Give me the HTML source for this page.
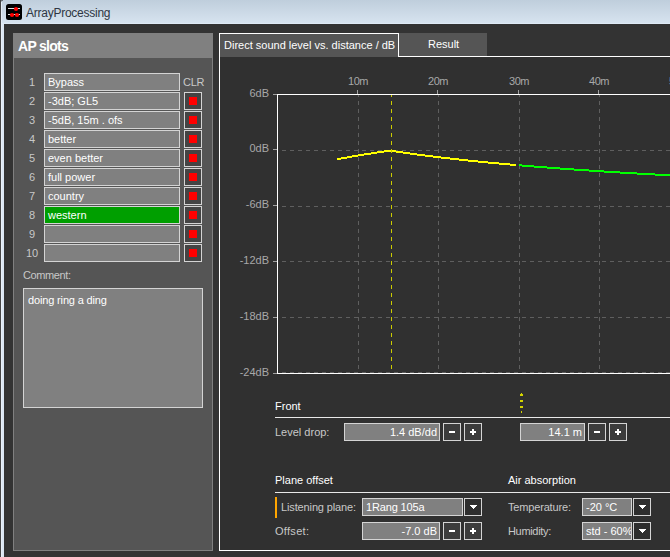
<!DOCTYPE html><html><head><meta charset="utf-8"><style>
html,body{margin:0;padding:0;width:670px;height:557px;overflow:hidden;background:#333333;font-family:'Liberation Sans', sans-serif;}
.t{position:absolute;white-space:nowrap;}
.b{position:absolute;box-sizing:border-box;}
</style></head><body>
<div class="b" style="left:0px;top:0px;width:670px;height:24px;background:linear-gradient(#bfcedc,#d8e4f0);"></div>
<div class="b" style="left:0px;top:23px;width:670px;height:1px;background:#dfeaf6;"></div>
<div class="b" style="left:0px;top:0px;width:1px;height:557px;background:#454545;"></div>
<div class="b" style="left:1px;top:24px;width:3px;height:533px;background:#dbe6f2;"></div>
<div class="b" style="left:1px;top:0px;width:1px;height:557px;background:#e9f0f8;opacity:0.9;"></div>
<div class="b" style="left:4px;top:24px;width:666px;height:533px;background:#333333;"></div>
<div class="b" style="left:1px;top:0px;width:2px;height:1px;background:#6a6f75;"></div>
<div class="b" style="left:1px;top:1px;width:1px;height:1px;background:#a9b2bb;"></div>
<svg class="b" style="left:6px;top:4px;width:16px;height:16px" viewBox="0 0 16 16"><rect x="0" y="0" width="16" height="16" rx="2.5" fill="#000"/><rect x="2" y="4" width="12" height="1" fill="#e0e0e0"/><rect x="2" y="10" width="12" height="1" fill="#e0e0e0"/><circle cx="10" cy="5" r="2.1" fill="#f00"/><circle cx="6" cy="11" r="2.1" fill="#f00"/><circle cx="11" cy="11" r="2.1" fill="#f00"/></svg>
<div class="t" style="left:26px;top:7px;font-size:12px;line-height:12px;color:#2e3642;letter-spacing:-0.25px;">ArrayProcessing</div>
<div class="b" style="left:13px;top:33px;width:200px;height:518px;background:#555555;border:1px solid #808080;"></div>
<div class="b" style="left:13px;top:33px;width:200px;height:25px;background:#808080;"></div>
<div class="t" style="left:18px;top:39px;font-size:14px;line-height:14px;color:#ffffff;font-weight:bold;letter-spacing:-0.7px;">AP slots</div>
<div class="b" style="left:44px;top:73px;width:136px;height:18px;background:#808080;border:1px solid #d4d4d4;"></div>
<div class="t" style="left:-18px;width:100px;top:77px;font-size:11px;line-height:11px;color:#c8c8c8;text-align:center;width:100px;">1</div>
<div class="t" style="left:48px;top:77px;font-size:11px;line-height:11px;color:#ffffff;">Bypass</div>
<div class="b" style="left:44px;top:92px;width:136px;height:18px;background:#808080;border:1px solid #d4d4d4;"></div>
<div class="t" style="left:-18px;width:100px;top:96px;font-size:11px;line-height:11px;color:#c8c8c8;text-align:center;width:100px;">2</div>
<div class="t" style="left:48px;top:96px;font-size:11px;line-height:11px;color:#ffffff;">-3dB; GL5</div>
<div class="b" style="left:184px;top:92px;width:18px;height:18px;background:#444444;border:1px solid #d4d4d4;"></div>
<div class="b" style="left:189px;top:97px;width:8px;height:8px;background:#ff0000;"></div>
<div class="b" style="left:44px;top:111px;width:136px;height:18px;background:#808080;border:1px solid #d4d4d4;"></div>
<div class="t" style="left:-18px;width:100px;top:115px;font-size:11px;line-height:11px;color:#c8c8c8;text-align:center;width:100px;">3</div>
<div class="t" style="left:48px;top:115px;font-size:11px;line-height:11px;color:#ffffff;">-5dB, 15m . ofs</div>
<div class="b" style="left:184px;top:111px;width:18px;height:18px;background:#444444;border:1px solid #d4d4d4;"></div>
<div class="b" style="left:189px;top:116px;width:8px;height:8px;background:#ff0000;"></div>
<div class="b" style="left:44px;top:130px;width:136px;height:18px;background:#808080;border:1px solid #d4d4d4;"></div>
<div class="t" style="left:-18px;width:100px;top:134px;font-size:11px;line-height:11px;color:#c8c8c8;text-align:center;width:100px;">4</div>
<div class="t" style="left:48px;top:134px;font-size:11px;line-height:11px;color:#ffffff;">better</div>
<div class="b" style="left:184px;top:130px;width:18px;height:18px;background:#444444;border:1px solid #d4d4d4;"></div>
<div class="b" style="left:189px;top:135px;width:8px;height:8px;background:#ff0000;"></div>
<div class="b" style="left:44px;top:149px;width:136px;height:18px;background:#808080;border:1px solid #d4d4d4;"></div>
<div class="t" style="left:-18px;width:100px;top:153px;font-size:11px;line-height:11px;color:#c8c8c8;text-align:center;width:100px;">5</div>
<div class="t" style="left:48px;top:153px;font-size:11px;line-height:11px;color:#ffffff;">even better</div>
<div class="b" style="left:184px;top:149px;width:18px;height:18px;background:#444444;border:1px solid #d4d4d4;"></div>
<div class="b" style="left:189px;top:154px;width:8px;height:8px;background:#ff0000;"></div>
<div class="b" style="left:44px;top:168px;width:136px;height:18px;background:#808080;border:1px solid #d4d4d4;"></div>
<div class="t" style="left:-18px;width:100px;top:172px;font-size:11px;line-height:11px;color:#c8c8c8;text-align:center;width:100px;">6</div>
<div class="t" style="left:48px;top:172px;font-size:11px;line-height:11px;color:#ffffff;">full power</div>
<div class="b" style="left:184px;top:168px;width:18px;height:18px;background:#444444;border:1px solid #d4d4d4;"></div>
<div class="b" style="left:189px;top:173px;width:8px;height:8px;background:#ff0000;"></div>
<div class="b" style="left:44px;top:187px;width:136px;height:18px;background:#808080;border:1px solid #d4d4d4;"></div>
<div class="t" style="left:-18px;width:100px;top:191px;font-size:11px;line-height:11px;color:#c8c8c8;text-align:center;width:100px;">7</div>
<div class="t" style="left:48px;top:191px;font-size:11px;line-height:11px;color:#ffffff;">country</div>
<div class="b" style="left:184px;top:187px;width:18px;height:18px;background:#444444;border:1px solid #d4d4d4;"></div>
<div class="b" style="left:189px;top:192px;width:8px;height:8px;background:#ff0000;"></div>
<div class="b" style="left:44px;top:206px;width:136px;height:18px;background:#009f00;border:1px solid #d4d4d4;"></div>
<div class="t" style="left:-18px;width:100px;top:210px;font-size:11px;line-height:11px;color:#c8c8c8;text-align:center;width:100px;">8</div>
<div class="t" style="left:48px;top:210px;font-size:11px;line-height:11px;color:#ffffff;">western</div>
<div class="b" style="left:184px;top:206px;width:18px;height:18px;background:#444444;border:1px solid #d4d4d4;"></div>
<div class="b" style="left:189px;top:211px;width:8px;height:8px;background:#ff0000;"></div>
<div class="b" style="left:44px;top:225px;width:136px;height:18px;background:#808080;border:1px solid #d4d4d4;"></div>
<div class="t" style="left:-18px;width:100px;top:229px;font-size:11px;line-height:11px;color:#c8c8c8;text-align:center;width:100px;">9</div>
<div class="b" style="left:184px;top:225px;width:18px;height:18px;background:#444444;border:1px solid #d4d4d4;"></div>
<div class="b" style="left:189px;top:230px;width:8px;height:8px;background:#ff0000;"></div>
<div class="b" style="left:44px;top:244px;width:136px;height:18px;background:#808080;border:1px solid #d4d4d4;"></div>
<div class="t" style="left:-18px;width:100px;top:248px;font-size:11px;line-height:11px;color:#c8c8c8;text-align:center;width:100px;">10</div>
<div class="b" style="left:184px;top:244px;width:18px;height:18px;background:#444444;border:1px solid #d4d4d4;"></div>
<div class="b" style="left:189px;top:249px;width:8px;height:8px;background:#ff0000;"></div>
<div class="t" style="left:183px;top:77px;font-size:11px;line-height:11px;color:#c8c8c8;letter-spacing:-0.3px;">CLR</div>
<div class="t" style="left:23px;top:270px;font-size:11px;line-height:11px;color:#c8c8c8;letter-spacing:-0.4px;">Comment:</div>
<div class="b" style="left:23px;top:288px;width:180px;height:120px;background:#808080;border:1px solid #d4d4d4;"></div>
<div class="t" style="left:28px;top:295px;font-size:11px;line-height:11px;color:#ffffff;letter-spacing:-0.15px;">doing ring a ding</div>
<div class="b" style="left:219px;top:56px;width:482px;height:495px;background:#303030;border:1px solid #ffffff;"></div>
<div class="b" style="left:219px;top:33px;width:180px;height:24px;background:#555555;border:1px solid #ffffff;border-bottom:none;"></div>
<div class="b" style="left:399px;top:33px;width:88px;height:23px;background:#555555;"></div>
<div class="t" style="left:224px;top:40px;font-size:11px;line-height:11px;color:#ffffff;">Direct sound level vs. distance / dB</div>
<div class="t" style="left:428px;top:39px;font-size:11px;line-height:11px;color:#ffffff;">Result</div>
<svg class="b" style="left:0;top:0;width:670px;height:557px" viewBox="0 0 670 557" shape-rendering="crispEdges"><rect x="282" y="150" width="4" height="1" fill="#5f5f5f"/><rect x="290" y="150" width="4" height="1" fill="#5f5f5f"/><rect x="298" y="150" width="4" height="1" fill="#5f5f5f"/><rect x="306" y="150" width="4" height="1" fill="#5f5f5f"/><rect x="314" y="150" width="4" height="1" fill="#5f5f5f"/><rect x="322" y="150" width="4" height="1" fill="#5f5f5f"/><rect x="330" y="150" width="4" height="1" fill="#5f5f5f"/><rect x="338" y="150" width="4" height="1" fill="#5f5f5f"/><rect x="346" y="150" width="4" height="1" fill="#5f5f5f"/><rect x="354" y="150" width="4" height="1" fill="#5f5f5f"/><rect x="362" y="150" width="4" height="1" fill="#5f5f5f"/><rect x="370" y="150" width="4" height="1" fill="#5f5f5f"/><rect x="378" y="150" width="4" height="1" fill="#5f5f5f"/><rect x="386" y="150" width="4" height="1" fill="#5f5f5f"/><rect x="394" y="150" width="4" height="1" fill="#5f5f5f"/><rect x="402" y="150" width="4" height="1" fill="#5f5f5f"/><rect x="410" y="150" width="4" height="1" fill="#5f5f5f"/><rect x="418" y="150" width="4" height="1" fill="#5f5f5f"/><rect x="426" y="150" width="4" height="1" fill="#5f5f5f"/><rect x="434" y="150" width="4" height="1" fill="#5f5f5f"/><rect x="442" y="150" width="4" height="1" fill="#5f5f5f"/><rect x="450" y="150" width="4" height="1" fill="#5f5f5f"/><rect x="458" y="150" width="4" height="1" fill="#5f5f5f"/><rect x="466" y="150" width="4" height="1" fill="#5f5f5f"/><rect x="474" y="150" width="4" height="1" fill="#5f5f5f"/><rect x="482" y="150" width="4" height="1" fill="#5f5f5f"/><rect x="490" y="150" width="4" height="1" fill="#5f5f5f"/><rect x="498" y="150" width="4" height="1" fill="#5f5f5f"/><rect x="506" y="150" width="4" height="1" fill="#5f5f5f"/><rect x="514" y="150" width="4" height="1" fill="#5f5f5f"/><rect x="522" y="150" width="4" height="1" fill="#5f5f5f"/><rect x="530" y="150" width="4" height="1" fill="#5f5f5f"/><rect x="538" y="150" width="4" height="1" fill="#5f5f5f"/><rect x="546" y="150" width="4" height="1" fill="#5f5f5f"/><rect x="554" y="150" width="4" height="1" fill="#5f5f5f"/><rect x="562" y="150" width="4" height="1" fill="#5f5f5f"/><rect x="570" y="150" width="4" height="1" fill="#5f5f5f"/><rect x="578" y="150" width="4" height="1" fill="#5f5f5f"/><rect x="586" y="150" width="4" height="1" fill="#5f5f5f"/><rect x="594" y="150" width="4" height="1" fill="#5f5f5f"/><rect x="602" y="150" width="4" height="1" fill="#5f5f5f"/><rect x="610" y="150" width="4" height="1" fill="#5f5f5f"/><rect x="618" y="150" width="4" height="1" fill="#5f5f5f"/><rect x="626" y="150" width="4" height="1" fill="#5f5f5f"/><rect x="634" y="150" width="4" height="1" fill="#5f5f5f"/><rect x="642" y="150" width="4" height="1" fill="#5f5f5f"/><rect x="650" y="150" width="4" height="1" fill="#5f5f5f"/><rect x="658" y="150" width="4" height="1" fill="#5f5f5f"/><rect x="666" y="150" width="4" height="1" fill="#5f5f5f"/><rect x="282" y="206" width="4" height="1" fill="#5f5f5f"/><rect x="290" y="206" width="4" height="1" fill="#5f5f5f"/><rect x="298" y="206" width="4" height="1" fill="#5f5f5f"/><rect x="306" y="206" width="4" height="1" fill="#5f5f5f"/><rect x="314" y="206" width="4" height="1" fill="#5f5f5f"/><rect x="322" y="206" width="4" height="1" fill="#5f5f5f"/><rect x="330" y="206" width="4" height="1" fill="#5f5f5f"/><rect x="338" y="206" width="4" height="1" fill="#5f5f5f"/><rect x="346" y="206" width="4" height="1" fill="#5f5f5f"/><rect x="354" y="206" width="4" height="1" fill="#5f5f5f"/><rect x="362" y="206" width="4" height="1" fill="#5f5f5f"/><rect x="370" y="206" width="4" height="1" fill="#5f5f5f"/><rect x="378" y="206" width="4" height="1" fill="#5f5f5f"/><rect x="386" y="206" width="4" height="1" fill="#5f5f5f"/><rect x="394" y="206" width="4" height="1" fill="#5f5f5f"/><rect x="402" y="206" width="4" height="1" fill="#5f5f5f"/><rect x="410" y="206" width="4" height="1" fill="#5f5f5f"/><rect x="418" y="206" width="4" height="1" fill="#5f5f5f"/><rect x="426" y="206" width="4" height="1" fill="#5f5f5f"/><rect x="434" y="206" width="4" height="1" fill="#5f5f5f"/><rect x="442" y="206" width="4" height="1" fill="#5f5f5f"/><rect x="450" y="206" width="4" height="1" fill="#5f5f5f"/><rect x="458" y="206" width="4" height="1" fill="#5f5f5f"/><rect x="466" y="206" width="4" height="1" fill="#5f5f5f"/><rect x="474" y="206" width="4" height="1" fill="#5f5f5f"/><rect x="482" y="206" width="4" height="1" fill="#5f5f5f"/><rect x="490" y="206" width="4" height="1" fill="#5f5f5f"/><rect x="498" y="206" width="4" height="1" fill="#5f5f5f"/><rect x="506" y="206" width="4" height="1" fill="#5f5f5f"/><rect x="514" y="206" width="4" height="1" fill="#5f5f5f"/><rect x="522" y="206" width="4" height="1" fill="#5f5f5f"/><rect x="530" y="206" width="4" height="1" fill="#5f5f5f"/><rect x="538" y="206" width="4" height="1" fill="#5f5f5f"/><rect x="546" y="206" width="4" height="1" fill="#5f5f5f"/><rect x="554" y="206" width="4" height="1" fill="#5f5f5f"/><rect x="562" y="206" width="4" height="1" fill="#5f5f5f"/><rect x="570" y="206" width="4" height="1" fill="#5f5f5f"/><rect x="578" y="206" width="4" height="1" fill="#5f5f5f"/><rect x="586" y="206" width="4" height="1" fill="#5f5f5f"/><rect x="594" y="206" width="4" height="1" fill="#5f5f5f"/><rect x="602" y="206" width="4" height="1" fill="#5f5f5f"/><rect x="610" y="206" width="4" height="1" fill="#5f5f5f"/><rect x="618" y="206" width="4" height="1" fill="#5f5f5f"/><rect x="626" y="206" width="4" height="1" fill="#5f5f5f"/><rect x="634" y="206" width="4" height="1" fill="#5f5f5f"/><rect x="642" y="206" width="4" height="1" fill="#5f5f5f"/><rect x="650" y="206" width="4" height="1" fill="#5f5f5f"/><rect x="658" y="206" width="4" height="1" fill="#5f5f5f"/><rect x="666" y="206" width="4" height="1" fill="#5f5f5f"/><rect x="282" y="261" width="4" height="1" fill="#5f5f5f"/><rect x="290" y="261" width="4" height="1" fill="#5f5f5f"/><rect x="298" y="261" width="4" height="1" fill="#5f5f5f"/><rect x="306" y="261" width="4" height="1" fill="#5f5f5f"/><rect x="314" y="261" width="4" height="1" fill="#5f5f5f"/><rect x="322" y="261" width="4" height="1" fill="#5f5f5f"/><rect x="330" y="261" width="4" height="1" fill="#5f5f5f"/><rect x="338" y="261" width="4" height="1" fill="#5f5f5f"/><rect x="346" y="261" width="4" height="1" fill="#5f5f5f"/><rect x="354" y="261" width="4" height="1" fill="#5f5f5f"/><rect x="362" y="261" width="4" height="1" fill="#5f5f5f"/><rect x="370" y="261" width="4" height="1" fill="#5f5f5f"/><rect x="378" y="261" width="4" height="1" fill="#5f5f5f"/><rect x="386" y="261" width="4" height="1" fill="#5f5f5f"/><rect x="394" y="261" width="4" height="1" fill="#5f5f5f"/><rect x="402" y="261" width="4" height="1" fill="#5f5f5f"/><rect x="410" y="261" width="4" height="1" fill="#5f5f5f"/><rect x="418" y="261" width="4" height="1" fill="#5f5f5f"/><rect x="426" y="261" width="4" height="1" fill="#5f5f5f"/><rect x="434" y="261" width="4" height="1" fill="#5f5f5f"/><rect x="442" y="261" width="4" height="1" fill="#5f5f5f"/><rect x="450" y="261" width="4" height="1" fill="#5f5f5f"/><rect x="458" y="261" width="4" height="1" fill="#5f5f5f"/><rect x="466" y="261" width="4" height="1" fill="#5f5f5f"/><rect x="474" y="261" width="4" height="1" fill="#5f5f5f"/><rect x="482" y="261" width="4" height="1" fill="#5f5f5f"/><rect x="490" y="261" width="4" height="1" fill="#5f5f5f"/><rect x="498" y="261" width="4" height="1" fill="#5f5f5f"/><rect x="506" y="261" width="4" height="1" fill="#5f5f5f"/><rect x="514" y="261" width="4" height="1" fill="#5f5f5f"/><rect x="522" y="261" width="4" height="1" fill="#5f5f5f"/><rect x="530" y="261" width="4" height="1" fill="#5f5f5f"/><rect x="538" y="261" width="4" height="1" fill="#5f5f5f"/><rect x="546" y="261" width="4" height="1" fill="#5f5f5f"/><rect x="554" y="261" width="4" height="1" fill="#5f5f5f"/><rect x="562" y="261" width="4" height="1" fill="#5f5f5f"/><rect x="570" y="261" width="4" height="1" fill="#5f5f5f"/><rect x="578" y="261" width="4" height="1" fill="#5f5f5f"/><rect x="586" y="261" width="4" height="1" fill="#5f5f5f"/><rect x="594" y="261" width="4" height="1" fill="#5f5f5f"/><rect x="602" y="261" width="4" height="1" fill="#5f5f5f"/><rect x="610" y="261" width="4" height="1" fill="#5f5f5f"/><rect x="618" y="261" width="4" height="1" fill="#5f5f5f"/><rect x="626" y="261" width="4" height="1" fill="#5f5f5f"/><rect x="634" y="261" width="4" height="1" fill="#5f5f5f"/><rect x="642" y="261" width="4" height="1" fill="#5f5f5f"/><rect x="650" y="261" width="4" height="1" fill="#5f5f5f"/><rect x="658" y="261" width="4" height="1" fill="#5f5f5f"/><rect x="666" y="261" width="4" height="1" fill="#5f5f5f"/><rect x="282" y="317" width="4" height="1" fill="#5f5f5f"/><rect x="290" y="317" width="4" height="1" fill="#5f5f5f"/><rect x="298" y="317" width="4" height="1" fill="#5f5f5f"/><rect x="306" y="317" width="4" height="1" fill="#5f5f5f"/><rect x="314" y="317" width="4" height="1" fill="#5f5f5f"/><rect x="322" y="317" width="4" height="1" fill="#5f5f5f"/><rect x="330" y="317" width="4" height="1" fill="#5f5f5f"/><rect x="338" y="317" width="4" height="1" fill="#5f5f5f"/><rect x="346" y="317" width="4" height="1" fill="#5f5f5f"/><rect x="354" y="317" width="4" height="1" fill="#5f5f5f"/><rect x="362" y="317" width="4" height="1" fill="#5f5f5f"/><rect x="370" y="317" width="4" height="1" fill="#5f5f5f"/><rect x="378" y="317" width="4" height="1" fill="#5f5f5f"/><rect x="386" y="317" width="4" height="1" fill="#5f5f5f"/><rect x="394" y="317" width="4" height="1" fill="#5f5f5f"/><rect x="402" y="317" width="4" height="1" fill="#5f5f5f"/><rect x="410" y="317" width="4" height="1" fill="#5f5f5f"/><rect x="418" y="317" width="4" height="1" fill="#5f5f5f"/><rect x="426" y="317" width="4" height="1" fill="#5f5f5f"/><rect x="434" y="317" width="4" height="1" fill="#5f5f5f"/><rect x="442" y="317" width="4" height="1" fill="#5f5f5f"/><rect x="450" y="317" width="4" height="1" fill="#5f5f5f"/><rect x="458" y="317" width="4" height="1" fill="#5f5f5f"/><rect x="466" y="317" width="4" height="1" fill="#5f5f5f"/><rect x="474" y="317" width="4" height="1" fill="#5f5f5f"/><rect x="482" y="317" width="4" height="1" fill="#5f5f5f"/><rect x="490" y="317" width="4" height="1" fill="#5f5f5f"/><rect x="498" y="317" width="4" height="1" fill="#5f5f5f"/><rect x="506" y="317" width="4" height="1" fill="#5f5f5f"/><rect x="514" y="317" width="4" height="1" fill="#5f5f5f"/><rect x="522" y="317" width="4" height="1" fill="#5f5f5f"/><rect x="530" y="317" width="4" height="1" fill="#5f5f5f"/><rect x="538" y="317" width="4" height="1" fill="#5f5f5f"/><rect x="546" y="317" width="4" height="1" fill="#5f5f5f"/><rect x="554" y="317" width="4" height="1" fill="#5f5f5f"/><rect x="562" y="317" width="4" height="1" fill="#5f5f5f"/><rect x="570" y="317" width="4" height="1" fill="#5f5f5f"/><rect x="578" y="317" width="4" height="1" fill="#5f5f5f"/><rect x="586" y="317" width="4" height="1" fill="#5f5f5f"/><rect x="594" y="317" width="4" height="1" fill="#5f5f5f"/><rect x="602" y="317" width="4" height="1" fill="#5f5f5f"/><rect x="610" y="317" width="4" height="1" fill="#5f5f5f"/><rect x="618" y="317" width="4" height="1" fill="#5f5f5f"/><rect x="626" y="317" width="4" height="1" fill="#5f5f5f"/><rect x="634" y="317" width="4" height="1" fill="#5f5f5f"/><rect x="642" y="317" width="4" height="1" fill="#5f5f5f"/><rect x="650" y="317" width="4" height="1" fill="#5f5f5f"/><rect x="658" y="317" width="4" height="1" fill="#5f5f5f"/><rect x="666" y="317" width="4" height="1" fill="#5f5f5f"/><rect x="282" y="372" width="4" height="1" fill="#5f5f5f"/><rect x="290" y="372" width="4" height="1" fill="#5f5f5f"/><rect x="298" y="372" width="4" height="1" fill="#5f5f5f"/><rect x="306" y="372" width="4" height="1" fill="#5f5f5f"/><rect x="314" y="372" width="4" height="1" fill="#5f5f5f"/><rect x="322" y="372" width="4" height="1" fill="#5f5f5f"/><rect x="330" y="372" width="4" height="1" fill="#5f5f5f"/><rect x="338" y="372" width="4" height="1" fill="#5f5f5f"/><rect x="346" y="372" width="4" height="1" fill="#5f5f5f"/><rect x="354" y="372" width="4" height="1" fill="#5f5f5f"/><rect x="362" y="372" width="4" height="1" fill="#5f5f5f"/><rect x="370" y="372" width="4" height="1" fill="#5f5f5f"/><rect x="378" y="372" width="4" height="1" fill="#5f5f5f"/><rect x="386" y="372" width="4" height="1" fill="#5f5f5f"/><rect x="394" y="372" width="4" height="1" fill="#5f5f5f"/><rect x="402" y="372" width="4" height="1" fill="#5f5f5f"/><rect x="410" y="372" width="4" height="1" fill="#5f5f5f"/><rect x="418" y="372" width="4" height="1" fill="#5f5f5f"/><rect x="426" y="372" width="4" height="1" fill="#5f5f5f"/><rect x="434" y="372" width="4" height="1" fill="#5f5f5f"/><rect x="442" y="372" width="4" height="1" fill="#5f5f5f"/><rect x="450" y="372" width="4" height="1" fill="#5f5f5f"/><rect x="458" y="372" width="4" height="1" fill="#5f5f5f"/><rect x="466" y="372" width="4" height="1" fill="#5f5f5f"/><rect x="474" y="372" width="4" height="1" fill="#5f5f5f"/><rect x="482" y="372" width="4" height="1" fill="#5f5f5f"/><rect x="490" y="372" width="4" height="1" fill="#5f5f5f"/><rect x="498" y="372" width="4" height="1" fill="#5f5f5f"/><rect x="506" y="372" width="4" height="1" fill="#5f5f5f"/><rect x="514" y="372" width="4" height="1" fill="#5f5f5f"/><rect x="522" y="372" width="4" height="1" fill="#5f5f5f"/><rect x="530" y="372" width="4" height="1" fill="#5f5f5f"/><rect x="538" y="372" width="4" height="1" fill="#5f5f5f"/><rect x="546" y="372" width="4" height="1" fill="#5f5f5f"/><rect x="554" y="372" width="4" height="1" fill="#5f5f5f"/><rect x="562" y="372" width="4" height="1" fill="#5f5f5f"/><rect x="570" y="372" width="4" height="1" fill="#5f5f5f"/><rect x="578" y="372" width="4" height="1" fill="#5f5f5f"/><rect x="586" y="372" width="4" height="1" fill="#5f5f5f"/><rect x="594" y="372" width="4" height="1" fill="#5f5f5f"/><rect x="602" y="372" width="4" height="1" fill="#5f5f5f"/><rect x="610" y="372" width="4" height="1" fill="#5f5f5f"/><rect x="618" y="372" width="4" height="1" fill="#5f5f5f"/><rect x="626" y="372" width="4" height="1" fill="#5f5f5f"/><rect x="634" y="372" width="4" height="1" fill="#5f5f5f"/><rect x="642" y="372" width="4" height="1" fill="#5f5f5f"/><rect x="650" y="372" width="4" height="1" fill="#5f5f5f"/><rect x="658" y="372" width="4" height="1" fill="#5f5f5f"/><rect x="666" y="372" width="4" height="1" fill="#5f5f5f"/><rect x="358" y="95" width="1" height="2" fill="#5f5f5f"/><rect x="358" y="101" width="1" height="4" fill="#5f5f5f"/><rect x="358" y="109" width="1" height="4" fill="#5f5f5f"/><rect x="358" y="117" width="1" height="4" fill="#5f5f5f"/><rect x="358" y="125" width="1" height="4" fill="#5f5f5f"/><rect x="358" y="133" width="1" height="4" fill="#5f5f5f"/><rect x="358" y="141" width="1" height="4" fill="#5f5f5f"/><rect x="358" y="149" width="1" height="4" fill="#5f5f5f"/><rect x="358" y="157" width="1" height="4" fill="#5f5f5f"/><rect x="358" y="165" width="1" height="4" fill="#5f5f5f"/><rect x="358" y="173" width="1" height="4" fill="#5f5f5f"/><rect x="358" y="181" width="1" height="4" fill="#5f5f5f"/><rect x="358" y="189" width="1" height="4" fill="#5f5f5f"/><rect x="358" y="197" width="1" height="4" fill="#5f5f5f"/><rect x="358" y="205" width="1" height="4" fill="#5f5f5f"/><rect x="358" y="213" width="1" height="4" fill="#5f5f5f"/><rect x="358" y="221" width="1" height="4" fill="#5f5f5f"/><rect x="358" y="229" width="1" height="4" fill="#5f5f5f"/><rect x="358" y="237" width="1" height="4" fill="#5f5f5f"/><rect x="358" y="245" width="1" height="4" fill="#5f5f5f"/><rect x="358" y="253" width="1" height="4" fill="#5f5f5f"/><rect x="358" y="261" width="1" height="4" fill="#5f5f5f"/><rect x="358" y="269" width="1" height="4" fill="#5f5f5f"/><rect x="358" y="277" width="1" height="4" fill="#5f5f5f"/><rect x="358" y="285" width="1" height="4" fill="#5f5f5f"/><rect x="358" y="293" width="1" height="4" fill="#5f5f5f"/><rect x="358" y="301" width="1" height="4" fill="#5f5f5f"/><rect x="358" y="309" width="1" height="4" fill="#5f5f5f"/><rect x="358" y="317" width="1" height="4" fill="#5f5f5f"/><rect x="358" y="325" width="1" height="4" fill="#5f5f5f"/><rect x="358" y="333" width="1" height="4" fill="#5f5f5f"/><rect x="358" y="341" width="1" height="4" fill="#5f5f5f"/><rect x="358" y="349" width="1" height="4" fill="#5f5f5f"/><rect x="358" y="357" width="1" height="4" fill="#5f5f5f"/><rect x="358" y="365" width="1" height="4" fill="#5f5f5f"/><rect x="438" y="95" width="1" height="2" fill="#5f5f5f"/><rect x="438" y="101" width="1" height="4" fill="#5f5f5f"/><rect x="438" y="109" width="1" height="4" fill="#5f5f5f"/><rect x="438" y="117" width="1" height="4" fill="#5f5f5f"/><rect x="438" y="125" width="1" height="4" fill="#5f5f5f"/><rect x="438" y="133" width="1" height="4" fill="#5f5f5f"/><rect x="438" y="141" width="1" height="4" fill="#5f5f5f"/><rect x="438" y="149" width="1" height="4" fill="#5f5f5f"/><rect x="438" y="157" width="1" height="4" fill="#5f5f5f"/><rect x="438" y="165" width="1" height="4" fill="#5f5f5f"/><rect x="438" y="173" width="1" height="4" fill="#5f5f5f"/><rect x="438" y="181" width="1" height="4" fill="#5f5f5f"/><rect x="438" y="189" width="1" height="4" fill="#5f5f5f"/><rect x="438" y="197" width="1" height="4" fill="#5f5f5f"/><rect x="438" y="205" width="1" height="4" fill="#5f5f5f"/><rect x="438" y="213" width="1" height="4" fill="#5f5f5f"/><rect x="438" y="221" width="1" height="4" fill="#5f5f5f"/><rect x="438" y="229" width="1" height="4" fill="#5f5f5f"/><rect x="438" y="237" width="1" height="4" fill="#5f5f5f"/><rect x="438" y="245" width="1" height="4" fill="#5f5f5f"/><rect x="438" y="253" width="1" height="4" fill="#5f5f5f"/><rect x="438" y="261" width="1" height="4" fill="#5f5f5f"/><rect x="438" y="269" width="1" height="4" fill="#5f5f5f"/><rect x="438" y="277" width="1" height="4" fill="#5f5f5f"/><rect x="438" y="285" width="1" height="4" fill="#5f5f5f"/><rect x="438" y="293" width="1" height="4" fill="#5f5f5f"/><rect x="438" y="301" width="1" height="4" fill="#5f5f5f"/><rect x="438" y="309" width="1" height="4" fill="#5f5f5f"/><rect x="438" y="317" width="1" height="4" fill="#5f5f5f"/><rect x="438" y="325" width="1" height="4" fill="#5f5f5f"/><rect x="438" y="333" width="1" height="4" fill="#5f5f5f"/><rect x="438" y="341" width="1" height="4" fill="#5f5f5f"/><rect x="438" y="349" width="1" height="4" fill="#5f5f5f"/><rect x="438" y="357" width="1" height="4" fill="#5f5f5f"/><rect x="438" y="365" width="1" height="4" fill="#5f5f5f"/><rect x="519" y="95" width="1" height="2" fill="#5f5f5f"/><rect x="519" y="101" width="1" height="4" fill="#5f5f5f"/><rect x="519" y="109" width="1" height="4" fill="#5f5f5f"/><rect x="519" y="117" width="1" height="4" fill="#5f5f5f"/><rect x="519" y="125" width="1" height="4" fill="#5f5f5f"/><rect x="519" y="133" width="1" height="4" fill="#5f5f5f"/><rect x="519" y="141" width="1" height="4" fill="#5f5f5f"/><rect x="519" y="149" width="1" height="4" fill="#5f5f5f"/><rect x="519" y="157" width="1" height="4" fill="#5f5f5f"/><rect x="519" y="165" width="1" height="4" fill="#5f5f5f"/><rect x="519" y="173" width="1" height="4" fill="#5f5f5f"/><rect x="519" y="181" width="1" height="4" fill="#5f5f5f"/><rect x="519" y="189" width="1" height="4" fill="#5f5f5f"/><rect x="519" y="197" width="1" height="4" fill="#5f5f5f"/><rect x="519" y="205" width="1" height="4" fill="#5f5f5f"/><rect x="519" y="213" width="1" height="4" fill="#5f5f5f"/><rect x="519" y="221" width="1" height="4" fill="#5f5f5f"/><rect x="519" y="229" width="1" height="4" fill="#5f5f5f"/><rect x="519" y="237" width="1" height="4" fill="#5f5f5f"/><rect x="519" y="245" width="1" height="4" fill="#5f5f5f"/><rect x="519" y="253" width="1" height="4" fill="#5f5f5f"/><rect x="519" y="261" width="1" height="4" fill="#5f5f5f"/><rect x="519" y="269" width="1" height="4" fill="#5f5f5f"/><rect x="519" y="277" width="1" height="4" fill="#5f5f5f"/><rect x="519" y="285" width="1" height="4" fill="#5f5f5f"/><rect x="519" y="293" width="1" height="4" fill="#5f5f5f"/><rect x="519" y="301" width="1" height="4" fill="#5f5f5f"/><rect x="519" y="309" width="1" height="4" fill="#5f5f5f"/><rect x="519" y="317" width="1" height="4" fill="#5f5f5f"/><rect x="519" y="325" width="1" height="4" fill="#5f5f5f"/><rect x="519" y="333" width="1" height="4" fill="#5f5f5f"/><rect x="519" y="341" width="1" height="4" fill="#5f5f5f"/><rect x="519" y="349" width="1" height="4" fill="#5f5f5f"/><rect x="519" y="357" width="1" height="4" fill="#5f5f5f"/><rect x="519" y="365" width="1" height="4" fill="#5f5f5f"/><rect x="599" y="95" width="1" height="2" fill="#5f5f5f"/><rect x="599" y="101" width="1" height="4" fill="#5f5f5f"/><rect x="599" y="109" width="1" height="4" fill="#5f5f5f"/><rect x="599" y="117" width="1" height="4" fill="#5f5f5f"/><rect x="599" y="125" width="1" height="4" fill="#5f5f5f"/><rect x="599" y="133" width="1" height="4" fill="#5f5f5f"/><rect x="599" y="141" width="1" height="4" fill="#5f5f5f"/><rect x="599" y="149" width="1" height="4" fill="#5f5f5f"/><rect x="599" y="157" width="1" height="4" fill="#5f5f5f"/><rect x="599" y="165" width="1" height="4" fill="#5f5f5f"/><rect x="599" y="173" width="1" height="4" fill="#5f5f5f"/><rect x="599" y="181" width="1" height="4" fill="#5f5f5f"/><rect x="599" y="189" width="1" height="4" fill="#5f5f5f"/><rect x="599" y="197" width="1" height="4" fill="#5f5f5f"/><rect x="599" y="205" width="1" height="4" fill="#5f5f5f"/><rect x="599" y="213" width="1" height="4" fill="#5f5f5f"/><rect x="599" y="221" width="1" height="4" fill="#5f5f5f"/><rect x="599" y="229" width="1" height="4" fill="#5f5f5f"/><rect x="599" y="237" width="1" height="4" fill="#5f5f5f"/><rect x="599" y="245" width="1" height="4" fill="#5f5f5f"/><rect x="599" y="253" width="1" height="4" fill="#5f5f5f"/><rect x="599" y="261" width="1" height="4" fill="#5f5f5f"/><rect x="599" y="269" width="1" height="4" fill="#5f5f5f"/><rect x="599" y="277" width="1" height="4" fill="#5f5f5f"/><rect x="599" y="285" width="1" height="4" fill="#5f5f5f"/><rect x="599" y="293" width="1" height="4" fill="#5f5f5f"/><rect x="599" y="301" width="1" height="4" fill="#5f5f5f"/><rect x="599" y="309" width="1" height="4" fill="#5f5f5f"/><rect x="599" y="317" width="1" height="4" fill="#5f5f5f"/><rect x="599" y="325" width="1" height="4" fill="#5f5f5f"/><rect x="599" y="333" width="1" height="4" fill="#5f5f5f"/><rect x="599" y="341" width="1" height="4" fill="#5f5f5f"/><rect x="599" y="349" width="1" height="4" fill="#5f5f5f"/><rect x="599" y="357" width="1" height="4" fill="#5f5f5f"/><rect x="599" y="365" width="1" height="4" fill="#5f5f5f"/><rect x="277" y="94" width="393" height="1" fill="#ffffff"/><rect x="277" y="373" width="393" height="1" fill="#ffffff"/><rect x="277" y="94" width="1" height="280" fill="#ffffff"/><rect x="273" y="94" width="4" height="1" fill="#a0a0a0"/><rect x="273" y="149" width="4" height="1" fill="#a0a0a0"/><rect x="273" y="205" width="4" height="1" fill="#a0a0a0"/><rect x="273" y="261" width="4" height="1" fill="#a0a0a0"/><rect x="273" y="317" width="4" height="1" fill="#a0a0a0"/><rect x="273" y="373" width="4" height="1" fill="#a0a0a0"/><rect x="357" y="90" width="1" height="4" fill="#a0a0a0"/><rect x="437" y="90" width="1" height="4" fill="#a0a0a0"/><rect x="518" y="90" width="1" height="4" fill="#a0a0a0"/><rect x="598" y="90" width="1" height="4" fill="#a0a0a0"/><rect x="337" y="158" width="4" height="2" fill="#ffff00"/><rect x="341" y="157" width="6" height="2" fill="#ffff00"/><rect x="347" y="156" width="5" height="2" fill="#ffff00"/><rect x="352" y="155" width="6" height="2" fill="#ffff00"/><rect x="358" y="154" width="6" height="2" fill="#ffff00"/><rect x="364" y="153" width="7" height="2" fill="#ffff00"/><rect x="371" y="152" width="6" height="2" fill="#ffff00"/><rect x="377" y="151" width="7" height="2" fill="#ffff00"/><rect x="384" y="150" width="12" height="2" fill="#ffff00"/><rect x="396" y="151" width="7" height="2" fill="#ffff00"/><rect x="403" y="152" width="7" height="2" fill="#ffff00"/><rect x="410" y="153" width="7" height="2" fill="#ffff00"/><rect x="417" y="154" width="8" height="2" fill="#ffff00"/><rect x="425" y="155" width="8" height="2" fill="#ffff00"/><rect x="433" y="156" width="8" height="2" fill="#ffff00"/><rect x="441" y="157" width="9" height="2" fill="#ffff00"/><rect x="450" y="158" width="9" height="2" fill="#ffff00"/><rect x="459" y="159" width="9" height="2" fill="#ffff00"/><rect x="468" y="160" width="10" height="2" fill="#ffff00"/><rect x="478" y="161" width="10" height="2" fill="#ffff00"/><rect x="488" y="162" width="11" height="2" fill="#ffff00"/><rect x="499" y="163" width="11" height="2" fill="#ffff00"/><rect x="510" y="164" width="6" height="2" fill="#ffff00"/><rect x="519" y="164" width="3" height="2" fill="#00ff00"/><rect x="522" y="165" width="12" height="2" fill="#00ff00"/><rect x="534" y="166" width="13" height="2" fill="#00ff00"/><rect x="547" y="167" width="13" height="2" fill="#00ff00"/><rect x="560" y="168" width="14" height="2" fill="#00ff00"/><rect x="574" y="169" width="15" height="2" fill="#00ff00"/><rect x="589" y="170" width="15" height="2" fill="#00ff00"/><rect x="604" y="171" width="16" height="2" fill="#00ff00"/><rect x="620" y="172" width="17" height="2" fill="#00ff00"/><rect x="637" y="173" width="18" height="2" fill="#00ff00"/><rect x="655" y="174" width="15" height="2" fill="#00ff00"/><rect x="391" y="95" width="1" height="2" fill="#cccc00"/><rect x="391" y="101" width="1" height="4" fill="#cccc00"/><rect x="391" y="109" width="1" height="4" fill="#cccc00"/><rect x="391" y="117" width="1" height="4" fill="#cccc00"/><rect x="391" y="125" width="1" height="4" fill="#cccc00"/><rect x="391" y="133" width="1" height="4" fill="#cccc00"/><rect x="391" y="141" width="1" height="4" fill="#cccc00"/><rect x="391" y="149" width="1" height="4" fill="#cccc00"/><rect x="391" y="157" width="1" height="4" fill="#cccc00"/><rect x="391" y="165" width="1" height="4" fill="#cccc00"/><rect x="391" y="173" width="1" height="4" fill="#cccc00"/><rect x="391" y="181" width="1" height="4" fill="#cccc00"/><rect x="391" y="189" width="1" height="4" fill="#cccc00"/><rect x="391" y="197" width="1" height="4" fill="#cccc00"/><rect x="391" y="205" width="1" height="4" fill="#cccc00"/><rect x="391" y="213" width="1" height="4" fill="#cccc00"/><rect x="391" y="221" width="1" height="4" fill="#cccc00"/><rect x="391" y="229" width="1" height="4" fill="#cccc00"/><rect x="391" y="237" width="1" height="4" fill="#cccc00"/><rect x="391" y="245" width="1" height="4" fill="#cccc00"/><rect x="391" y="253" width="1" height="4" fill="#cccc00"/><rect x="391" y="261" width="1" height="4" fill="#cccc00"/><rect x="391" y="269" width="1" height="4" fill="#cccc00"/><rect x="391" y="277" width="1" height="4" fill="#cccc00"/><rect x="391" y="285" width="1" height="4" fill="#cccc00"/><rect x="391" y="293" width="1" height="4" fill="#cccc00"/><rect x="391" y="301" width="1" height="4" fill="#cccc00"/><rect x="391" y="309" width="1" height="4" fill="#cccc00"/><rect x="391" y="317" width="1" height="4" fill="#cccc00"/><rect x="391" y="325" width="1" height="4" fill="#cccc00"/><rect x="391" y="333" width="1" height="4" fill="#cccc00"/><rect x="391" y="341" width="1" height="4" fill="#cccc00"/><rect x="391" y="349" width="1" height="4" fill="#cccc00"/><rect x="391" y="357" width="1" height="4" fill="#cccc00"/><rect x="391" y="365" width="1" height="4" fill="#cccc00"/><rect x="521" y="393" width="1" height="1" fill="#d4d400"/><rect x="520" y="394" width="3" height="2" fill="#d4d400"/><rect x="520" y="400" width="3" height="2" fill="#d4d400"/><rect x="520" y="406" width="3" height="2" fill="#d4d400"/><rect x="521" y="411" width="1" height="2" fill="#d4d400"/><rect x="275" y="417" width="395" height="1" fill="#e8e8e8"/><rect x="275" y="492" width="395" height="1" fill="#e8e8e8"/><rect x="275" y="497" width="2" height="21" fill="#ffa500"/></svg>
<div class="t" style="right:401px;top:88px;font-size:11px;line-height:11px;color:#a8a8a8;text-align:right;">6dB</div>
<div class="t" style="right:401px;top:143px;font-size:11px;line-height:11px;color:#a8a8a8;text-align:right;">0dB</div>
<div class="t" style="right:401px;top:199px;font-size:11px;line-height:11px;color:#a8a8a8;text-align:right;">-6dB</div>
<div class="t" style="right:401px;top:255px;font-size:11px;line-height:11px;color:#a8a8a8;text-align:right;">-12dB</div>
<div class="t" style="right:401px;top:311px;font-size:11px;line-height:11px;color:#a8a8a8;text-align:right;">-18dB</div>
<div class="t" style="right:401px;top:367px;font-size:11px;line-height:11px;color:#a8a8a8;text-align:right;">-24dB</div>
<div class="t" style="left:308px;width:100px;top:76px;font-size:11px;line-height:11px;color:#a8a8a8;text-align:center;letter-spacing:-0.5px;">10m</div>
<div class="t" style="left:388px;width:100px;top:76px;font-size:11px;line-height:11px;color:#a8a8a8;text-align:center;letter-spacing:-0.5px;">20m</div>
<div class="t" style="left:469px;width:100px;top:76px;font-size:11px;line-height:11px;color:#a8a8a8;text-align:center;letter-spacing:-0.5px;">30m</div>
<div class="t" style="left:549px;width:100px;top:76px;font-size:11px;line-height:11px;color:#a8a8a8;text-align:center;letter-spacing:-0.5px;">40m</div>
<div class="t" style="left:629px;width:100px;top:76px;font-size:11px;line-height:11px;color:#a8a8a8;text-align:center;letter-spacing:-0.5px;">50m</div>
<div class="t" style="left:275px;top:401px;font-size:11px;line-height:11px;color:#ffffff;">Front</div>
<div class="t" style="left:275px;top:427px;font-size:11px;line-height:11px;color:#c8c8c8;">Level drop:</div>
<div class="b" style="left:344px;top:423px;width:96px;height:18px;background:#808080;border:1px solid #d4d4d4;"></div>
<div class="t" style="left:344px;top:427px;width:93px;text-align:right;font-size:11px;line-height:11px;color:#fff;">1.4 dB/dd</div>
<div class="b" style="left:443px;top:423px;width:18px;height:18px;background:#3c3c3c;border:1px solid #d4d4d4;"></div>
<div class="b" style="left:449px;top:431px;width:6px;height:2px;background:#ffffff;"></div>
<div class="b" style="left:464px;top:423px;width:18px;height:18px;background:#3c3c3c;border:1px solid #d4d4d4;"></div>
<div class="b" style="left:470px;top:431px;width:6px;height:2px;background:#ffffff;"></div>
<div class="b" style="left:472px;top:429px;width:2px;height:6px;background:#ffffff;"></div>
<div class="b" style="left:520px;top:423px;width:65px;height:18px;background:#808080;border:1px solid #d4d4d4;"></div>
<div class="t" style="left:520px;top:427px;width:62px;text-align:right;font-size:11px;line-height:11px;color:#fff;">14.1 m</div>
<div class="b" style="left:588px;top:423px;width:18px;height:18px;background:#3c3c3c;border:1px solid #d4d4d4;"></div>
<div class="b" style="left:594px;top:431px;width:6px;height:2px;background:#ffffff;"></div>
<div class="b" style="left:609px;top:423px;width:18px;height:18px;background:#3c3c3c;border:1px solid #d4d4d4;"></div>
<div class="b" style="left:615px;top:431px;width:6px;height:2px;background:#ffffff;"></div>
<div class="b" style="left:617px;top:429px;width:2px;height:6px;background:#ffffff;"></div>
<div class="t" style="left:275px;top:475px;font-size:11px;line-height:11px;color:#ffffff;">Plane offset</div>
<div class="t" style="left:508px;top:475px;font-size:11px;line-height:11px;color:#ffffff;">Air absorption</div>
<div class="t" style="left:281px;top:502px;font-size:11px;line-height:11px;color:#c8c8c8;letter-spacing:-0.13px;">Listening plane:</div>
<div class="b" style="left:362px;top:498px;width:101px;height:18px;background:#808080;border:1px solid #d4d4d4;"></div>
<div class="t" style="left:366px;top:502px;width:96px;overflow:hidden;font-size:11px;line-height:11px;color:#fff;"><span style="letter-spacing:-0.15px">1Rang 105a</span></div>
<div class="b" style="left:464px;top:498px;width:18px;height:18px;background:#2e2e2e;border:1px solid #d4d4d4;"></div>
<div class="b" style="left:470px;top:505px;width:7px;height:1px;background:#ffffff;"></div>
<div class="b" style="left:471px;top:506px;width:5px;height:1px;background:#ffffff;"></div>
<div class="b" style="left:472px;top:507px;width:3px;height:1px;background:#ffffff;"></div>
<div class="b" style="left:473px;top:508px;width:1px;height:1px;background:#ffffff;"></div>
<div class="t" style="left:275px;top:526px;font-size:11px;line-height:11px;color:#c8c8c8;letter-spacing:0.3px;">Offset:</div>
<div class="b" style="left:362px;top:522px;width:78px;height:18px;background:#808080;border:1px solid #d4d4d4;"></div>
<div class="t" style="left:362px;top:526px;width:75px;text-align:right;font-size:11px;line-height:11px;color:#fff;">-7.0 dB</div>
<div class="b" style="left:443px;top:522px;width:18px;height:18px;background:#3c3c3c;border:1px solid #d4d4d4;"></div>
<div class="b" style="left:449px;top:530px;width:6px;height:2px;background:#ffffff;"></div>
<div class="b" style="left:464px;top:522px;width:18px;height:18px;background:#3c3c3c;border:1px solid #d4d4d4;"></div>
<div class="b" style="left:470px;top:530px;width:6px;height:2px;background:#ffffff;"></div>
<div class="b" style="left:472px;top:528px;width:2px;height:6px;background:#ffffff;"></div>
<div class="t" style="left:508px;top:502px;font-size:11px;line-height:11px;color:#c8c8c8;letter-spacing:-0.17px;">Temperature:</div>
<div class="b" style="left:582px;top:498px;width:50px;height:18px;background:#808080;border:1px solid #d4d4d4;"></div>
<div class="t" style="left:586px;top:502px;width:45px;overflow:hidden;font-size:11px;line-height:11px;color:#fff;">-20 °C</div>
<div class="b" style="left:633px;top:498px;width:18px;height:18px;background:#2e2e2e;border:1px solid #d4d4d4;"></div>
<div class="b" style="left:639px;top:505px;width:7px;height:1px;background:#ffffff;"></div>
<div class="b" style="left:640px;top:506px;width:5px;height:1px;background:#ffffff;"></div>
<div class="b" style="left:641px;top:507px;width:3px;height:1px;background:#ffffff;"></div>
<div class="b" style="left:642px;top:508px;width:1px;height:1px;background:#ffffff;"></div>
<div class="t" style="left:508px;top:526px;font-size:11px;line-height:11px;color:#c8c8c8;letter-spacing:-0.33px;">Humidity:</div>
<div class="b" style="left:582px;top:522px;width:50px;height:18px;background:#808080;border:1px solid #d4d4d4;"></div>
<div class="t" style="left:586px;top:526px;width:45px;overflow:hidden;font-size:11px;line-height:11px;color:#fff;">std - 60%</div>
<div class="b" style="left:633px;top:522px;width:18px;height:18px;background:#2e2e2e;border:1px solid #d4d4d4;"></div>
<div class="b" style="left:639px;top:529px;width:7px;height:1px;background:#ffffff;"></div>
<div class="b" style="left:640px;top:530px;width:5px;height:1px;background:#ffffff;"></div>
<div class="b" style="left:641px;top:531px;width:3px;height:1px;background:#ffffff;"></div>
<div class="b" style="left:642px;top:532px;width:1px;height:1px;background:#ffffff;"></div>
</body></html>
